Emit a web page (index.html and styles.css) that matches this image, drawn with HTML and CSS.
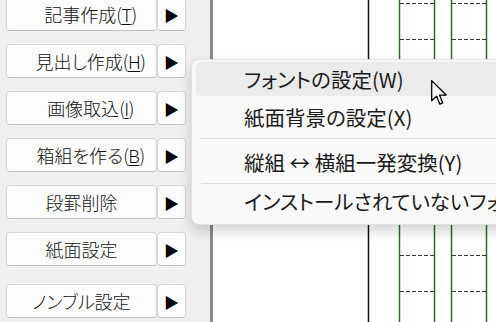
FILE: index.html
```html
<!DOCTYPE html>
<html lang="ja">
<head>
    <meta charset="UTF-8">
    <title>紙面編集</title>
    <link rel="stylesheet" href="styles.css">
</head>
<body>
    <div class="tools">
        <div class="tool-list">
            <div class="tool-row">
                <button class="tool-btn mn">記事作成<span class="key">(<u>T</u>)</span></button>
                <button class="arrow-btn">▶</button>
            </div>
            <div class="tool-row">
                <button class="tool-btn mn">見出し作成<span class="key">(<u>H</u>)</span></button>
                <button class="arrow-btn">▶</button>
            </div>
            <div class="tool-row">
                <button class="tool-btn mn">画像取込<span class="key">(<u>I</u>)</span></button>
                <button class="arrow-btn">▶</button>
            </div>
            <div class="tool-row">
                <button class="tool-btn mn">箱組を作る<span class="key">(<u>B</u>)</span></button>
                <button class="arrow-btn">▶</button>
            </div>
            <div class="tool-row">
                <button class="tool-btn">段罫削除</button>
                <button class="arrow-btn">▶</button>
            </div>
            <div class="tool-row">
                <button class="tool-btn">紙面設定</button>
                <button class="arrow-btn">▶</button>
            </div>
            <div class="tool-row last">
                <button class="tool-btn">ノンブル設定</button>
                <button class="arrow-btn">▶</button>
            </div>
        </div>
    </div>

    <div class="paper">
        <!-- 段組の罫線 -->
        <svg class="paper-lines" width="283" height="322">
            <line x1="155.5" y1="0" x2="155.5" y2="322" stroke="#111" stroke-width="1.5"/>
            <g stroke="#2d6a2d" stroke-width="1.5">
                <line x1="186.5" y1="0" x2="186.5" y2="322"/>
                <line x1="221.5" y1="0" x2="221.5" y2="322"/>
                <line x1="238.5" y1="0" x2="238.5" y2="322"/>
                <line x1="273.5" y1="0" x2="273.5" y2="322"/>
            </g>
            <g id="dashes" stroke="#2a3f2a" stroke-width="1" stroke-dasharray="4 2"></g>
        </svg>
    </div>

    <div class="menu">
        <div class="menu-item active">フォントの設定(W)</div>
        <div class="menu-item">紙面背景の設定(X)</div>
        <div class="menu-sep"></div>
        <div class="menu-item">縦組 ↔ 横組一発変換(Y)</div>
        <div class="menu-sep tight"></div>
        <div class="menu-item">インストールされていないフォントの置換(Z)</div>
    </div>

    <svg class="cursor" width="17" height="26" viewBox="0 0 13 20">
        <path d="M0.5 0.5 L0.5 16 L4.2 12.4 L6.8 18.6 L9 17.6 L6.5 11.6 L11.6 11.6 Z" fill="#fff" stroke="#000" stroke-width="1" stroke-linejoin="round"/>
    </svg>

    <script>
        // 罫線の点線を行ごとに描く
        const dashes = document.getElementById("dashes");
        for (let y = 3.5; y < 322; y += 36) {
            for (const [x1, x2] of [[187, 221], [239, 273]]) {
                const l = document.createElementNS("http://www.w3.org/2000/svg", "line");
                l.setAttribute("x1", x1);
                l.setAttribute("x2", x2);
                l.setAttribute("y1", y);
                l.setAttribute("y2", y);
                dashes.appendChild(l);
            }
        }
    </script>
</body>
</html>
```

FILE: styles.css
```css
* {
    box-sizing: border-box;
}

body {
    margin: 0;
    width: 496px;
    height: 322px;
    overflow: hidden;
    display: flex;
    background-color: #f0f0f0;
    font-family: "Noto Sans CJK JP", "Noto Sans", sans-serif;
    font-feature-settings: "palt";
    font-weight: 300;
    color: #1a1a1a;
}

.tools {
    width: 210px;
    padding-left: 6px;
}

.tool-list {
    display: flex;
    flex-direction: column;
    gap: 13px;
    margin-top: -3px;
}

.tool-row {
    display: flex;
    height: 34px;
}

.tool-row.last {
    margin-top: 5px;
}

.tool-btn,
.arrow-btn {
    background: #fdfdfd;
    border: 1px solid #d5d5d5;
    border-bottom-color: #c2c2c2;
    border-radius: 4px;
    font-family: inherit;
    font-feature-settings: "palt";
    font-weight: 300;
    color: #111;
    padding: 0;
}

.tool-btn {
    width: 151px;
    font-size: 18px;
    line-height: 1;
}

.tool-btn.mn {
    padding-left: 18px;
}

.tool-btn .key {
    letter-spacing: -0.5px;
}

.tool-btn u {
    text-underline-offset: 2px;
}

.arrow-btn {
    width: 29px;
    font-size: 15px;
    color: #000;
}

.paper {
    flex: 1;
    background: #fff;
    border-left: 3px solid #8a8a8a;
}

.paper-lines {
    display: block;
}

.menu {
    position: absolute;
    left: 191px;
    top: 59px;
    width: 340px;
    height: 166px;
    padding: 2px 0 4px;
    background: #f9f9f9;
    border: 1px solid #e2e2e2;
    border-radius: 8px;
    box-shadow: 0 6px 14px rgba(0, 0, 0, 0.18);
}

.menu-item {
    height: 34px;
    margin: 0 0 4px 4px;
    padding-left: 48px;
    border-radius: 5px;
    font-size: 20.5px;
    font-weight: 400;
    line-height: 34px;
    white-space: nowrap;
    color: #1b1b1b;
}

.menu-item.active {
    background: #ebebeb;
}

.menu-sep {
    height: 1px;
    margin: 0 0 6px 9px;
    background: #dcdcdc;
}

.menu-sep.tight {
    margin-bottom: 0;
}

.cursor {
    position: absolute;
    left: 431px;
    top: 80px;
}
```
